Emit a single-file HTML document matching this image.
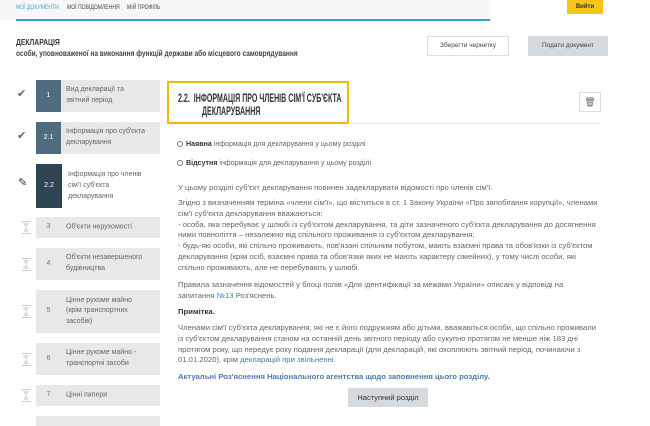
<!DOCTYPE html>
<html><head><meta charset="utf-8"><style>
*{margin:0;padding:0;box-sizing:border-box}
body{width:650px;height:420px;overflow:hidden;background:#fff;font-family:"Liberation Sans",sans-serif;color:#555;position:relative}
.a{position:absolute}
.nav{left:0;top:0;width:490px;height:20px;background:#f7f7f7}
.nav span{position:absolute;top:4px;font-size:6.5px;color:#444;white-space:nowrap;transform:scaleX(.78);transform-origin:left}
.bl{left:16px;top:19px;width:474px;height:2px;background:#2ea3d6}
.item{position:absolute;left:36px;width:124px;background:#e8e8e8;font-size:7px;color:#666;line-height:10.8px}
.num{position:absolute;left:0;top:0;bottom:0;width:25px;background:#4f6c80;color:#fff;font-size:7px;display:flex;align-items:center;justify-content:center}
.num.g{background:none;color:#777}
.txt{position:absolute;left:30px;right:4px;top:50%;transform:translateY(-50%)}
.ck{position:absolute;left:17px;font-size:11px;color:#4f6c80}
.hg{position:absolute;left:22px;width:9px;height:13px;border-top:1px solid #ccc;border-bottom:1px solid #ccc}
.hg:before{content:"";position:absolute;left:1px;top:1px;border-left:3.5px solid transparent;border-right:3.5px solid transparent;border-top:5px solid #ddd}
.hg:after{content:"";position:absolute;left:1px;bottom:1px;border-left:3.5px solid transparent;border-right:3.5px solid transparent;border-bottom:5px solid #ddd}
.p{font-size:7.7px;line-height:10.8px;color:#666;left:178px;width:460px;white-space:nowrap}
a{color:#4a7ab0;text-decoration:none}
.sx{white-space:nowrap;transform-origin:left;display:inline-block}
</style></head><body>
<div class="a nav"><span style="left:16px;color:#4aa3d6">МОЇ ДОКУМЕНТИ</span><span style="left:67px">МОЇ ПОВІДОМЛЕННЯ</span><span style="left:127px">МІЙ ПРОФІЛЬ</span></div>
<div class="a" style="left:567px;top:0;width:36px;height:14px;background:#f5c518;font-size:6px;font-weight:bold;color:#333;text-align:center;line-height:14px">Вийти</div>
<div class="a bl"></div>
<div class="a" style="left:16px;top:38px;font-size:8px;font-weight:bold;color:#333"><span class="sx" style="transform:scaleX(.85)">ДЕКЛАРАЦІЯ</span></div>
<div class="a" style="left:16px;top:49px;font-size:8px;font-weight:bold;color:#444"><span class="sx" style="transform:scaleX(.82)">особи, уповноваженої на виконання функцій держави або місцевого самоврядування</span></div>
<div class="a" style="left:427px;top:36px;width:82px;height:20px;border:1px solid #ddd;font-size:6.5px;color:#444;text-align:center;line-height:18px">Зберегти чернетку</div>
<div class="a" style="left:528px;top:36px;width:80px;height:20px;background:#d5dade;font-size:6.5px;color:#444;text-align:center;line-height:20px">Подати документ</div>

<div class="ck" style="top:87px">✔</div>
<div class="item" style="top:80px;height:32px"><div class="num">1</div><div class="txt">Вид декларації та<br>звітний період</div></div>
<div class="ck" style="top:129px">✔</div>
<div class="item" style="top:122px;height:32px"><div class="num">2.1</div><div class="txt">Інформація про суб'єкта декларування</div></div>
<div class="a" style="left:18px;top:176px;font-size:11px;color:#333">✎</div>
<div class="item" style="top:164px;height:44px;background:#fff"><div class="num" style="width:26px;background:#2f4554">2.2</div><div class="txt" style="left:32px">Інформація про членів<br>сім'ї суб'єкта<br>декларування</div></div>
<div class="hg" style="top:221px"></div>
<div class="item" style="top:217px;height:21px"><div class="num g">3</div><div class="txt">Об'єкти нерухомості</div></div>
<div class="hg" style="top:258px"></div>
<div class="item" style="top:248px;height:32px"><div class="num g">4</div><div class="txt">Об'єкти незавершеного<br>будівництва</div></div>
<div class="hg" style="top:305px"></div>
<div class="item" style="top:290px;height:43px"><div class="num g">5</div><div class="txt">Цінне рухоме майно<br>(крім транспортних<br>засобів)</div></div>
<div class="hg" style="top:353px"></div>
<div class="item" style="top:343px;height:32px"><div class="num g">6</div><div class="txt">Цінне рухоме майно -<br>транспортні засоби</div></div>
<div class="hg" style="top:389px"></div>
<div class="item" style="top:385px;height:21px"><div class="num g">7</div><div class="txt">Цінні папери</div></div>
<div class="item" style="top:416px;height:10px"></div>

<div class="a" style="left:167px;top:81px;width:182px;height:43px;border:2px solid #f5b800"></div>
<div class="a" style="left:178px;top:92px;font-size:12px;font-weight:bold;color:#333;line-height:13px"><span class="sx" style="transform:scaleX(.59)">2.2.&nbsp; ІНФОРМАЦІЯ ПРО ЧЛЕНІВ СІМ'Ї СУБ'ЄКТА</span><br><span class="sx" style="transform:scaleX(.59);margin-left:24px">ДЕКЛАРУВАННЯ</span></div>
<div class="a" style="left:348px;top:123px;width:253px;height:1px;background:#e5e5e5"></div>
<div class="a" style="left:579px;top:92px;width:22px;height:20px;border:1px solid #ddd;text-align:center;font-size:9px;line-height:18px;color:#666">🗑</div>

<div class="a" style="left:177px;top:141px;width:6px;height:6px;border:1px solid #777;border-radius:50%"></div>
<div class="a" style="left:186px;top:140px;font-size:7.1px;color:#666"><b style="color:#333">Наявна</b> інформація для декларування у цьому розділі</div>
<div class="a" style="left:177px;top:160px;width:6px;height:6px;border:1px solid #777;border-radius:50%"></div>
<div class="a" style="left:186px;top:159px;font-size:7.1px;color:#666"><b style="color:#333">Відсутня</b> інформація для декларування у цьому розділі</div>

<div class="a p" style="top:183px">У цьому розділі суб'єкт декларування повинен задекларувати відомості про членів сім'ї.</div>
<div class="a p" style="top:198px">Згідно з визначенням терміна «члени сім'ї», що міститься в ст. 1 Закону України «Про запобігання корупції», членами<br>сім'ї суб'єкта декларування вважаються:<br>- особа, яка перебуває у шлюбі із суб'єктом декларування, та діти зазначеного суб'єкта декларування до досягнення<br>ними повноліття – незалежно від спільного проживання із суб'єктом декларування;<br>- будь-які особи, які спільно проживають, пов'язані спільним побутом, мають взаємні права та обов'язки із суб'єктом<br>декларування (крім осіб, взаємні права та обов'язки яких не мають характеру сімейних), у тому числі особи, які<br>спільно проживають, але не перебувають у шлюбі.</div>
<div class="a p" style="top:280px">Правила зазначення відомостей у блоці полів «Для ідентифікації за межами України» описані у відповіді на<br>запитання <a>№13</a> Роз'яснень.</div>
<div class="a p" style="top:307px;font-weight:bold;color:#333">Примітка.</div>
<div class="a p" style="top:323px">Членами сім'ї суб'єкта декларування, які не є його подружжям або дітьми, вважаються особи, що спільно проживали<br>із суб'єктом декларування станом на останній день звітного періоду або сукупно протягом не менше ніж 183 дні<br>протягом року, що передує року подання декларації (для декларацій, які охоплюють звітний період, починаючи з<br>01.01.2020), крім <a>декларацій при звільненні</a>.</div>
<div class="a p" style="top:372px;font-weight:bold"><a>Актуальні Роз'яснення Національного агентства щодо заповнення цього розділу</a>.</div>
<div class="a" style="left:348px;top:388px;width:80px;height:19px;background:#d5dade;border-radius:2px;font-size:7.5px;color:#333;text-align:center;line-height:19px">Наступний розділ</div>
</body></html>
